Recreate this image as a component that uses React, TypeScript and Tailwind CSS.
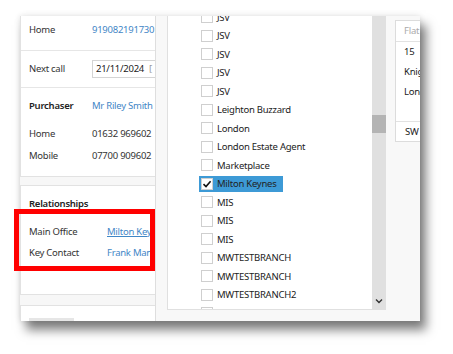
import React from "react";

const items: { label: string; checked?: boolean }[] = [
  { label: "JSV" },
  { label: "JSV" },
  { label: "JSV" },
  { label: "JSV" },
  { label: "JSV" },
  { label: "Leighton Buzzard" },
  { label: "London" },
  { label: "London Estate Agent" },
  { label: "Marketplace" },
  { label: "Milton Keynes", checked: true },
  { label: "MIS" },
  { label: "MIS" },
  { label: "MIS" },
  { label: "MWTESTBRANCH" },
  { label: "MWTESTBRANCH" },
  { label: "MWTESTBRANCH2" },
  { label: "" },
];

function Row({ label, value, link, bold }: { label: string; value: string; link?: boolean; bold?: boolean }) {
  return (
    <div className="flex items-center h-[21px]">
      <div className={`w-[63px] shrink-0 ${bold ? "font-semibold text-[#222]" : "text-[#333]"}`}>{label}</div>
      <div className={`whitespace-nowrap ${link ? "text-[#3f86c6]" : "text-[#333]"}`}>{value}</div>
    </div>
  );
}

export default function App() {
  return (
    <div
      className="w-[453px] h-[354px] bg-white overflow-hidden pt-[16px] pl-[20px] text-[9.5px] leading-none tracking-[-0.25px]"
      style={{ fontFamily: '"Segoe UI", "Noto Sans", "Open Sans", sans-serif' }}
    >
      <div className="relative w-[400px] h-[305px] shadow-[0_0_6px_rgba(0,0,0,0.12),6px_9px_10px_rgba(0,0,0,0.5)]">
        <div className="w-full h-full flex overflow-hidden">
          {/* Left panel */}
          <div className="w-[135px] shrink-0 h-full bg-[#f7f7f7] flex flex-col overflow-hidden">
            <div className="h-[161px] shrink-0 bg-white border-l border-b border-[#e2e2e2] pl-[8px] flex flex-col">
              <div className="h-[35px] shrink-0 border-b border-[#e6e6e6] -ml-[8px] pl-[8px] pt-[9px]">
                <div className="flex">
                  <div className="w-[63px] shrink-0 text-[#333]">Home</div>
                  <div className="text-[#3f86c6] whitespace-nowrap">919082191730</div>
                </div>
              </div>
              <div className="h-[37px] shrink-0 border-b border-[#e6e6e6] -ml-[8px] pl-[8px] flex items-center">
                <div className="w-[63px] shrink-0 text-[#333] whitespace-nowrap">Next call</div>
                <div className="h-[18px] flex-1 border border-[#d4d4d4] border-r-0 flex items-center pl-[3px] text-[#222] whitespace-nowrap overflow-hidden">
                  21/11/2024 <span className="ml-[5px] text-[#999]">[</span>
                </div>
              </div>
              <div className="pt-[7px] flex flex-col">
                <Row label="Purchaser" value="Mr Riley Smith" link bold />
                <div className="h-[7px]" />
                <Row label="Home" value="01632 969602" />
                <div className="h-[1px]" />
                <Row label="Mobile" value="07700 909602" />
              </div>
            </div>
            <div className="h-[8px] shrink-0" />
            <div className="h-[110px] shrink-0 bg-white border-l border-b border-t border-[#e2e2e2] pl-[8px] pt-[7px]">
              <div className="h-[21px] flex items-center font-semibold text-[#222]">Relationships</div>
              <div className="h-[7px]" />
              <div className="flex items-center h-[21px]">
                <div className="w-[78px] shrink-0 text-[#333] whitespace-nowrap">Main Office</div>
                <div className="text-[#3f86c6] underline whitespace-nowrap">Milton Keynes</div>
              </div>
              <div className="flex items-center h-[21px]">
                <div className="w-[78px] shrink-0 text-[#333] whitespace-nowrap">Key Contact</div>
                <div className="text-[#3f86c6] whitespace-nowrap">Frank Manning</div>
              </div>
            </div>
            <div className="h-[10px] shrink-0" />
            <div className="flex-1 bg-white border-l border-t border-[#e2e2e2] pl-[8px] pt-[12px]">
              <div className="w-[45px] h-[10px] bg-[#e6e6e6]" />
            </div>
          </div>

          {/* Dropdown + right area */}
          <div className="flex-1 min-w-0 h-full bg-[#f8f8f8] border-l border-[#dedede] flex">
            <div className="pl-[11px] pb-[11px] flex shrink-0">
              <div className="w-[205px] shrink-0 h-full bg-white border-l border-b border-[#e0e0e0] overflow-hidden">
                <div className="-mt-[8px] flex flex-col">
                  {items.map((it, i) => (
                    <div key={i} className="h-[18.5px] flex items-center pl-[31px] shrink-0">
                      <div className={`flex items-center h-[16px] pl-[2px] pr-[2px] ${it.checked ? "bg-[#3d9ad6]" : ""}`}>
                        <div className="w-[12px] h-[12px] bg-white border border-[#cfcfcf] flex items-center justify-center shrink-0">
                          {it.checked && (
                            <svg width="10" height="10" viewBox="0 0 10 10">
                              <path d="M1.5 5.2 L4 7.6 L8.6 2.2" fill="none" stroke="#111" strokeWidth="1.6" />
                            </svg>
                          )}
                        </div>
                        <span className="ml-[4px] text-[#222] whitespace-nowrap">{it.label}</span>
                        {it.checked && <span className="w-[5px]" />}
                      </div>
                    </div>
                  ))}
                </div>
              </div>
              <div className="w-[14px] shrink-0 h-full bg-[#e0e0e0] flex flex-col items-center">
                <div className="h-[99px]" />
                <div className="w-[14px] h-[18px] bg-[#b4b4b4]" />
                <div className="flex-1" />
                <svg width="8" height="6" viewBox="0 0 8 6" className="mb-[6px]">
                  <path d="M1 1.5 L4 4.5 L7 1.5" fill="none" stroke="#333" strokeWidth="1.4" />
                </svg>
              </div>
            </div>
            <div className="flex-1 min-w-0 pl-[9px] pt-[4px] overflow-hidden">
              <div className="h-[122px] w-[60px] bg-white border-l border-t border-b border-[#dcdcdc] flex flex-col">
                <div className="h-[21px] border-b border-[#e2e2e2] flex items-center pl-[8px] text-[#aaa]">Flat</div>
                <div className="h-[20px] flex items-center pl-[8px] text-[#222]">15</div>
                <div className="h-[20px] flex items-center pl-[8px] text-[#222] whitespace-nowrap">Knightsbridge</div>
                <div className="h-[20px] flex items-center pl-[8px] text-[#222]">London</div>
                <div className="flex-1" />
                <div className="h-[20px] border-t border-[#e2e2e2] flex items-center pl-[9px] text-[#222]">SW</div>
              </div>
            </div>
          </div>
        </div>

        {/* Red annotation box */}
        <div className="absolute left-[-6px] top-[193px] w-[141px] h-[62px] border-[5px] border-[#ff0000]" />
      </div>
    </div>
  );
}
